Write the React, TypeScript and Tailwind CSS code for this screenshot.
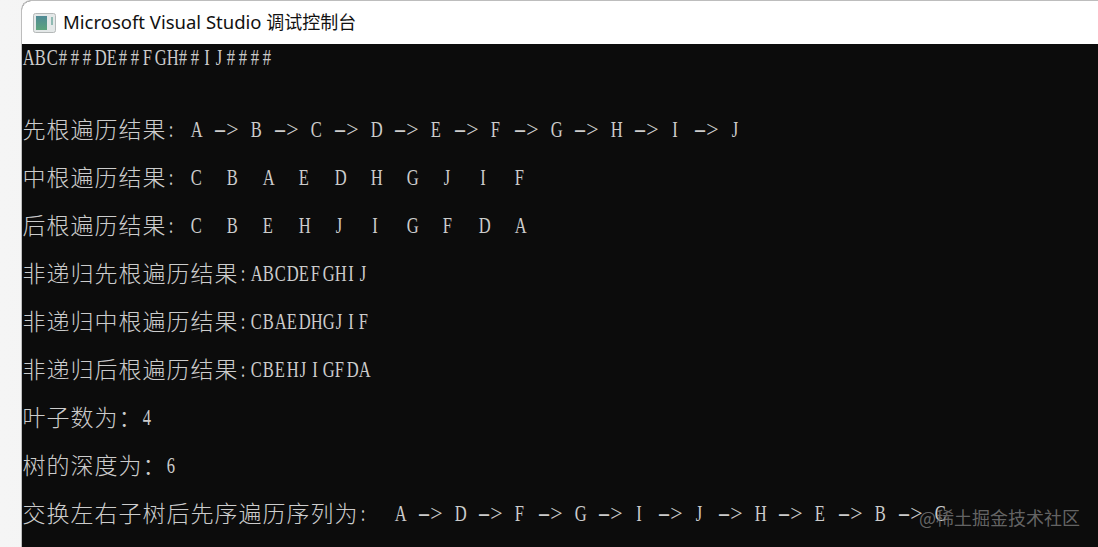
const lines = [
  'ABC###DE##FGH##IJ####',
  '先根遍历结果: A -> B -> C -> D -> E -> F -> G -> H -> I -> J',
  '中根遍历结果: C  B  A  E  D  H  G  J  I  F',
  '后根遍历结果: C  B  E  H  J  I  G  F  D  A',
  '非递归先根遍历结果:ABCDEFGHIJ',
  '非递归中根遍历结果:CBAEDHGJIF',
  '非递归后根遍历结果:CBEHJIGFDA',
  '叶子数为：4',
  '树的深度为：6',
  '交换左右子树后先序遍历序列为:  A -> D -> F -> G -> I -> J -> H -> E -> B -> C',
];

// console cells: 12px for ascii, 24px for wide chars
function ConsoleLine({ text }: { text: string }) {
  return (
    <div className="flex h-6 items-center whitespace-pre">
      {Array.from(text).map((ch, i) => {
        if (ch.charCodeAt(0) >= 128) {
          return (
            <span key={i} className="w-6 shrink-0 -translate-y-[2px] text-center font-['Noto_Sans_CJK_SC',sans-serif] text-[23px] font-light leading-6">
              {ch}
            </span>
          );
        }
        let shape = '-translate-x-px scale-x-[0.72]';
        if (ch === '-') shape = 'scale-x-[1.7]';
        if (ch === '>') shape = 'scale-x-[0.95]';
        return (
          <span key={i} className={`w-3 shrink-0 text-center font-['Liberation_Serif',serif] text-[23px] leading-6 ${shape}`}>
            {ch}
          </span>
        );
      })}
    </div>
  );
}

function ConsoleIcon() {
  return (
    <svg width="23" height="20" viewBox="0 0 23 20" className="shrink-0">
      <rect x="0.5" y="0.5" width="22" height="19" rx="2" fill="#e4e8e8" stroke="#b4b8b8" />
      <defs>
        <linearGradient id="con" x1="0" y1="0" x2="0" y2="1">
          <stop offset="0" stopColor="#4f8a96" />
          <stop offset="1" stopColor="#5da47c" />
        </linearGradient>
      </defs>
      <rect x="3" y="3" width="11" height="14" fill="url(#con)" />
      <rect x="18" y="4" width="2" height="8" fill="#8fbab2" />
    </svg>
  );
}

export default function App() {
  return (
    <div className="relative flex h-[547px] w-[1098px] overflow-hidden bg-gradient-to-r from-[#f5f5f5] to-[#e6e8e8] pl-[21px]">
      <div className="flex flex-1 flex-col overflow-hidden rounded-tl-[10px] border-t border-l border-[#bdbdbd] bg-[#0c0c0c]">
        <div className="flex h-[43px] shrink-0 items-center gap-[7px] bg-white pl-[11px]">
          <ConsoleIcon />
          <span className="-translate-y-px font-['Noto_Sans','Noto_Sans_CJK_SC',sans-serif] text-[18.5px] text-[#111]">
            Microsoft Visual Studio <span className="text-[18px]">调试控制台</span>
          </span>
        </div>
        <div className="flex flex-col pt-[2px] text-[#cccccc]">
          {lines.map((line, i) => (
            <div key={i} className={i === 0 ? 'mb-12' : 'mb-6'}>
              <ConsoleLine text={line} />
            </div>
          ))}
        </div>
      </div>
      <div className="absolute top-[504px] left-[919px] font-['Noto_Sans_CJK_SC',sans-serif] text-[18px] leading-[26px] text-[#7c7c7c]/80">
        @稀土掘金技术社区
      </div>
    </div>
  );
}
